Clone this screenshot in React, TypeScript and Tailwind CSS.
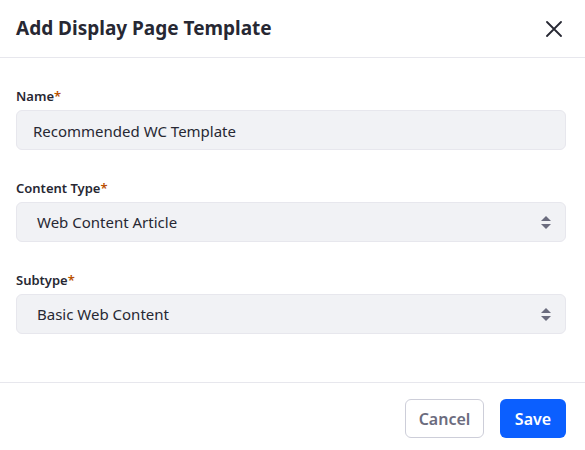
const font = { fontFamily: '"Noto Sans", "Open Sans", sans-serif' };

function Field({ label, children }: { label: string; children: React.ReactNode }) {
  return (
    <div className="mb-7">
      <label className="mb-1 block text-[13px] font-semibold leading-5 text-[#272833]">
        {label}
        <span className="text-[#b95000]">*</span>
      </label>
      {children}
    </div>
  );
}

function SelectBox({ value }: { value: string }) {
  return (
    <div className="flex h-10 items-center justify-between rounded-md border border-[#e7e7ed] bg-[#f1f2f5] pl-5 pr-[14px] text-[15px] text-[#272833]">
      <span>{value}</span>
      <svg width="10" height="13" viewBox="0 0 10 13" fill="#6b6c7e">
        <path d="M5 0 L10 5 H0 Z" />
        <path d="M0 8 H10 L5 13 Z" />
      </svg>
    </div>
  );
}

export default function App() {
  return (
    <div className="h-[450px] w-[585px] bg-white" style={font}>
      <div className="flex h-[58px] items-center justify-between border-b border-[#e7e7ed] pl-4 pr-[23px]">
        <h1 className="text-[19px] font-bold text-[#272833]">Add Display Page Template</h1>
        <svg width="16" height="16" viewBox="0 0 16 16" stroke="#272833" strokeWidth="1.8" strokeLinecap="round">
          <path d="M1 1 L15 15 M15 1 L1 15" />
        </svg>
      </div>

      <div className="pb-5 pl-4 pr-[19px] pt-[28px]">
        <Field label="Name">
          <div className="flex h-10 items-center rounded-md border border-[#e7e7ed] bg-[#f1f2f5] px-4 pt-[2px] text-[15px] text-[#272833]">
            Recommended WC Template
          </div>
        </Field>
        <Field label="Content Type">
          <SelectBox value="Web Content Article" />
        </Field>
        <Field label="Subtype">
          <SelectBox value="Basic Web Content" />
        </Field>
      </div>

      <div className="flex justify-end gap-4 border-t border-[#e7e7ed] pl-4 pr-[19px] pt-4">
        <button className="h-[39px] w-[79px] rounded-md border border-[#cdced9] bg-white text-[16px] font-semibold text-[#6b6c7e]">
          Cancel
        </button>
        <button className="h-[39px] w-[66px] rounded-md bg-[#0b5fff] text-[16px] font-semibold text-white">
          Save
        </button>
      </div>
    </div>
  );
}
